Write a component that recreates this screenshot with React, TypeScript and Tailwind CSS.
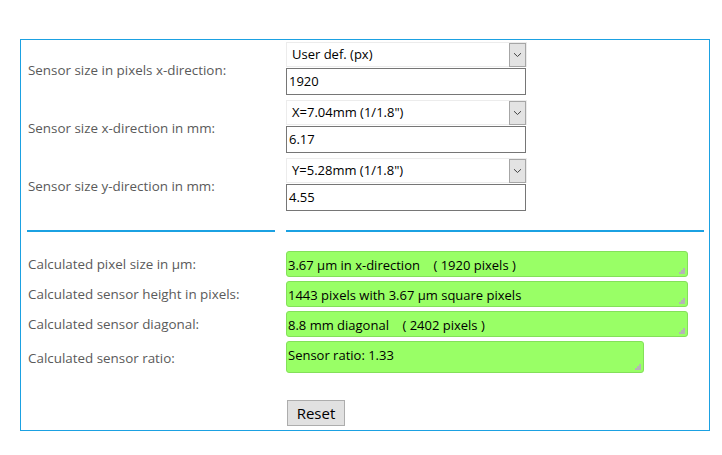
import * as React from "react"

const font = { fontFamily: '"Open Sans", "Liberation Sans", sans-serif' }

function Grip() {
  return (
    <svg width="7" height="7" viewBox="0 0 7 7" className="absolute bottom-[2px] right-[2px]">
      <rect x="5" y="1" width="2" height="2" fill="#b5b5b5" />
      <rect x="3" y="3" width="2" height="2" fill="#b5b5b5" />
      <rect x="5" y="3" width="2" height="2" fill="#b5b5b5" />
      <rect x="1" y="5" width="2" height="2" fill="#b5b5b5" />
      <rect x="3" y="5" width="2" height="2" fill="#b5b5b5" />
      <rect x="5" y="5" width="2" height="2" fill="#b5b5b5" />
    </svg>
  )
}

function SelectBox({ value }: { value: string }) {
  return (
    <div className="relative flex h-[25px] w-[241px] items-center border border-[#ececec] bg-white pl-[5px] text-[13px] text-black">
      {value}
      <div className="absolute right-0 top-0 flex h-[24px] w-[17px] items-center justify-center border border-[#a6a6a6] bg-[#e3e3e3]">
        <svg width="9" height="6" viewBox="0 0 9 6">
          <path d="M1 1.2 L4.5 4.5 L8 1.2" fill="none" stroke="#444" strokeWidth="1" />
        </svg>
      </div>
    </div>
  )
}

function InputBox({ value }: { value: string }) {
  return (
    <div className="mt-px flex h-[27px] w-[240px] items-center border border-[#767676] bg-white pl-[2px] pt-px text-[13px] text-black">
      {value}
    </div>
  )
}

function Output({ text, wide = true, tall = false }: { text: string; wide?: boolean; tall?: boolean }) {
  return (
    <div
      className={`relative rounded-[3px] border border-[#84e05a] bg-[#99ff66] pl-[1px] pt-[5px] text-[13px] leading-[17px] text-black whitespace-pre ${
        wide ? "w-[402px]" : "w-[358px]"
      } ${tall ? "h-[32px]" : "h-[26px]"}`}
    >
      {text}
      <Grip />
    </div>
  )
}

const inputs = [
  { label: "Sensor size in pixels x-direction:", select: "User def. (px)", value: "1920" },
  { label: "Sensor size x-direction in mm:", select: 'X=7.04mm (1/1.8")', value: "6.17" },
  { label: "Sensor size y-direction in mm:", select: 'Y=5.28mm (1/1.8")', value: "4.55" },
]

const outputs = [
  { label: "Calculated pixel size in µm:", text: "3.67 µm in x-direction    ( 1920 pixels )" },
  { label: "Calculated sensor height in pixels:", text: "1443 pixels with 3.67 µm square pixels" },
  { label: "Calculated sensor diagonal:", text: "8.8 mm diagonal    ( 2402 pixels )" },
  { label: "Calculated sensor ratio:", text: "Sensor ratio: 1.33", narrow: true },
]

export default function App() {
  return (
    <div className="h-[455px] w-[722px] bg-white pt-[39px]" style={font}>
      <div className="ml-[20px] h-[392px] w-[690px] border border-[#1ba1e2] pl-[6px] pt-[2px]">
        <div className="grid grid-cols-[248px_418px] gap-x-[11px]">
          {inputs.map((r, i) => (
            <React.Fragment key={r.label}>
              <div className={`flex items-center pl-px text-[13.4px] text-[#5a5a5a] ${i > 0 ? "mt-[5px]" : ""}`}>
                <span className="mt-[4px]">{r.label}</span>
              </div>
              <div className={i > 0 ? "mt-[5px]" : ""}>
                <SelectBox value={r.select} />
                <InputBox value={r.value} />
              </div>
            </React.Fragment>
          ))}

          <div className="mt-[19px] h-[2px] bg-[#1ba1e2]" />
          <div className="mt-[19px] h-[2px] bg-[#1ba1e2]" />

          {outputs.map((r, i) => (
            <React.Fragment key={r.label}>
              <div
                className={`flex items-center pl-px text-[13.4px] text-[#5a5a5a] ${i === 0 ? "mt-[19px]" : "mt-[4px]"}`}
              >
                <span className={r.narrow ? "mt-[3px]" : "mt-px"}>{r.label}</span>
              </div>
              <div className={i === 0 ? "mt-[19px]" : "mt-[4px]"}>
                <Output text={r.text} wide={!r.narrow} tall={!!r.narrow} />
              </div>
            </React.Fragment>
          ))}

          <div />
          <div className="mt-[27px] pl-px">
            <button className="h-[26px] w-[58px] border border-[#adadad] bg-[#e1e1e1] text-[15px] text-black">
              Reset
            </button>
          </div>
        </div>
      </div>
    </div>
  )
}
